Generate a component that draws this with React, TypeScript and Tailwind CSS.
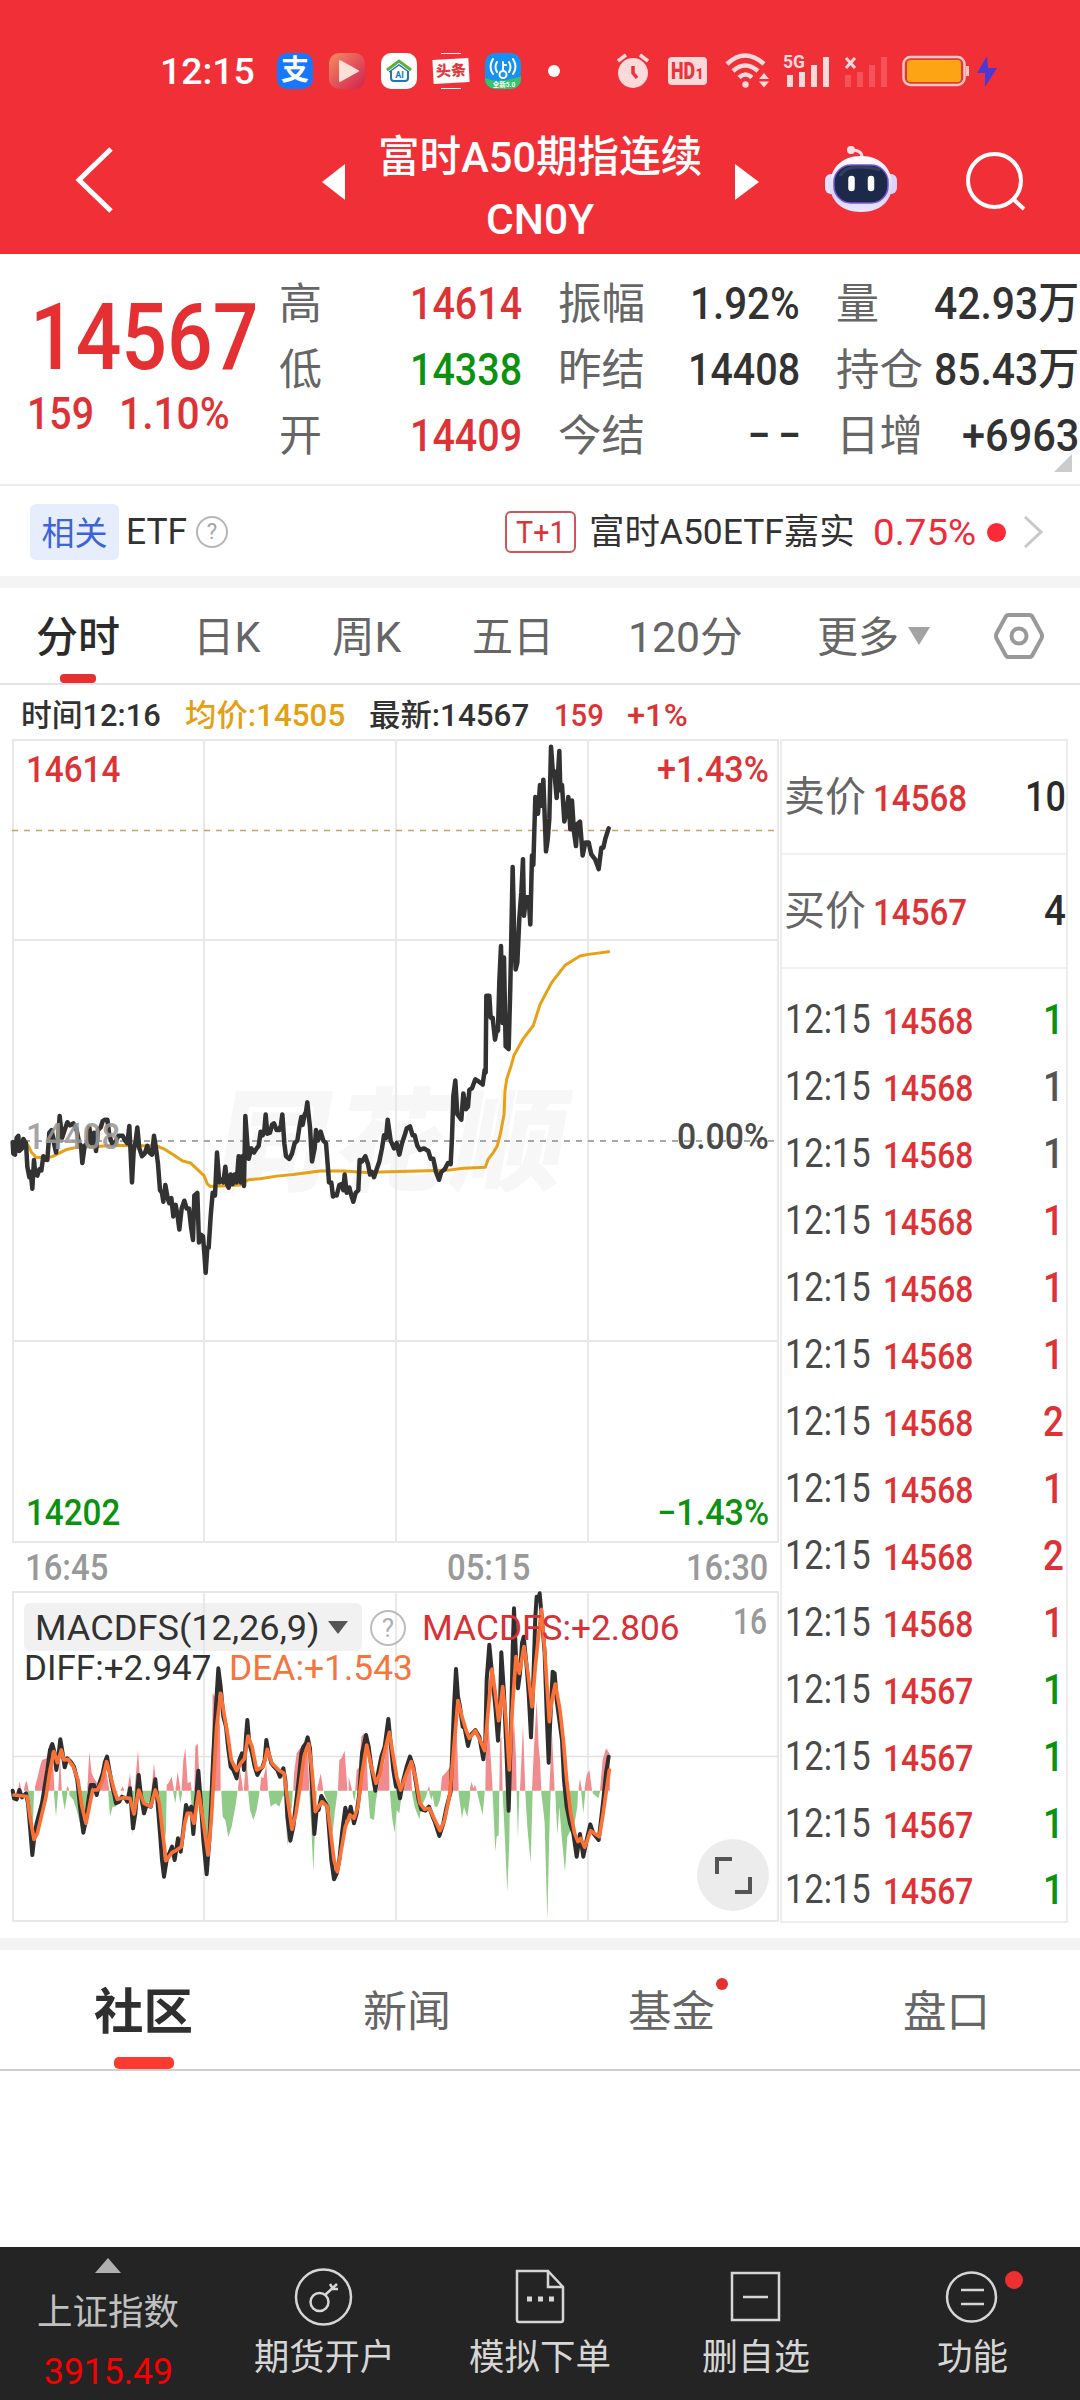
import React, { useLayoutEffect, useRef, useState } from 'react';

interface FitProps {
  w: number;
  className?: string;
  children: React.ReactNode;
}

// Condenses a line of text so that it fills exactly `w` pixels
const Fit: React.FC<FitProps> = ({ w, className = '', children }) => {
  const ref = useRef<HTMLSpanElement>(null);
  const [scale, setScale] = useState(1);

  useLayoutEffect(() => {
    if (ref.current) setScale(w / ref.current.offsetWidth);
  }, [w]);

  return (
    <span className={`inline-flex shrink-0 ${className}`} style={{ width: w }}>
      <span
        ref={ref}
        className="inline-block shrink-0 origin-left whitespace-pre"
        style={{ transform: `scaleX(${scale})` }}
      >
        {children}
      </span>
    </span>
  );
};

const tone = {
  red: 'text-[#dd3336]',
  green: 'text-[#0b920f]',
  dark: 'text-[#323232]',
  gray: 'text-[#555555]',
} as const;

type Tone = keyof typeof tone;

interface QuoteCell {
  label: string;
  labelW: number;
  value: string;
  valueW: number;
  color: Tone;
}

const quoteColumns: QuoteCell[][] = [
  [
    { label: '高', labelW: 43, value: '14614', valueW: 112, color: 'red' },
    { label: '低', labelW: 43, value: '14338', valueW: 112, color: 'green' },
    { label: '开', labelW: 43, value: '14409', valueW: 112, color: 'red' },
  ],
  [
    { label: '振幅', labelW: 87, value: '1.92%', valueW: 110, color: 'dark' },
    { label: '昨结', labelW: 87, value: '14408', valueW: 112, color: 'dark' },
    { label: '今结', labelW: 87, value: '– –', valueW: 52, color: 'dark' },
  ],
  [
    { label: '量', labelW: 43, value: '42.93万', valueW: 145, color: 'dark' },
    { label: '持仓', labelW: 87, value: '85.43万', valueW: 145, color: 'dark' },
    { label: '日增', labelW: 87, value: '+6963', valueW: 117, color: 'dark' },
  ],
];

const periods = [
  { label: '日K', w: 67, margin: 'ml-[73px]' },
  { label: '周K', w: 69, margin: 'ml-[72px]' },
  { label: '五日', w: 82, margin: 'ml-[71px]' },
  { label: '120分', w: 115, margin: 'ml-[74px]' },
  { label: '更多', w: 82, margin: 'ml-[74px]' },
];

const trades: { price: string; qty: number; color: Tone }[] = [
  { price: '14568', qty: 1, color: 'green' },
  { price: '14568', qty: 1, color: 'gray' },
  { price: '14568', qty: 1, color: 'gray' },
  { price: '14568', qty: 1, color: 'red' },
  { price: '14568', qty: 1, color: 'red' },
  { price: '14568', qty: 1, color: 'red' },
  { price: '14568', qty: 2, color: 'red' },
  { price: '14568', qty: 1, color: 'red' },
  { price: '14568', qty: 2, color: 'red' },
  { price: '14568', qty: 1, color: 'red' },
  { price: '14567', qty: 1, color: 'green' },
  { price: '14567', qty: 1, color: 'green' },
  { price: '14567', qty: 1, color: 'green' },
  { price: '14567', qty: 1, color: 'green' },
];

// Series are "x,y" pairs, x counts thirds of a pixel from the screen edge
const priceLine =
  '38,788 40,810 45,812 50,780 55,776 58,805 66,800 70,782 78,790 82,835 88,855 92,845 97,877 102,822 106,850 112,852 118,840 124,842 130,815 136,820 142,822 148,770 155,765 162,790 168,808 174,780 179,738 186,780 194,765 202,750 210,756 220,752 230,765 238,790 243,795 247,828 254,795 262,790 268,760 274,790 282,770 288,805 294,765 302,760 308,748 315,745 322,745 328,775 336,790 345,790 355,776 368,776 375,785 382,790 388,757 392,810 396,865 401,805 406,790 412,760 418,800 426,815 434,810 442,795 448,808 456,812 462,776 468,800 474,830 480,880 486,885 490,902 496,870 503,895 508,905 514,895 520,930 527,908 533,930 538,955 545,915 553,900 560,915 567,915 573,950 579,975 583,890 592,885 597,980 603,965 609,968 613,1000 617,1038 622,990 626,990 632,930 638,885 645,890 651,808 658,865 664,860 670,865 676,835 682,870 686,875 692,850 698,868 704,850 710,865 716,815 722,865 727,815 732,872 736,738 742,790 746,820 754,800 762,808 770,800 776,795 782,768 788,775 793,765 797,735 802,772 810,770 816,755 822,752 830,765 838,765 843,755 847,735 853,790 858,815 868,820 876,810 884,790 892,785 898,760 904,740 908,755 914,735 918,730 922,712 930,760 936,825 944,800 948,765 954,785 962,768 970,785 978,790 983,830 987,865 994,865 999,892 1006,888 1010,890 1018,870 1026,868 1030,880 1034,850 1040,885 1048,875 1054,890 1060,902 1067,885 1075,880 1079,822 1086,825 1096,815 1104,830 1110,850 1116,845 1122,855 1130,840 1138,825 1146,800 1152,775 1158,780 1163,745 1172,785 1182,800 1190,790 1198,812 1206,790 1214,775 1220,762 1230,758 1238,775 1244,775 1252,795 1260,803 1272,800 1285,805 1292,820 1300,820 1308,845 1317,860 1324,845 1334,840 1344,828 1352,830 1356,780 1360,700 1366,670 1372,735 1376,738 1384,745 1390,695 1398,725 1404,720 1408,688 1416,685 1426,668 1436,672 1448,678 1454,650 1457,655 1459,508 1468,508 1472,550 1478,550 1485,592 1490,575 1494,575 1498,480 1503,413 1508,560 1512,435 1517,605 1526,610 1531,490 1538,262 1543,400 1547,458 1552,445 1558,360 1564,310 1569,247 1572,355 1578,320 1586,320 1591,372 1596,240 1600,258 1606,128 1614,160 1620,105 1626,145 1630,95 1638,232 1643,210 1648,170 1653,32 1658,75 1663,80 1670,130 1678,40 1681,115 1686,105 1693,175 1700,155 1705,128 1711,190 1716,135 1722,195 1728,222 1732,180 1740,175 1748,240 1756,215 1766,215 1774,238 1786,248 1796,266 1804,225 1810,225 1816,208 1826,188';

const averageLine =
  '38,788 60,790 85,795 95,808 108,817 130,818 155,816 175,810 200,802 230,798 300,796 350,794 400,795 470,795 495,802 520,812 548,824 572,828 592,840 612,852 622,868 632,873 720,870 745,860 780,858 830,853 880,850 960,843 1030,843 1100,846 1140,845 1340,842 1390,838 1456,836 1465,820 1480,808 1492,795 1502,770 1512,735 1515,690 1520,668 1532,645 1542,622 1570,590 1600,565 1620,525 1655,483 1695,450 1740,432 1765,429 1826,424';

const diffLine =
  '38,752 42,775 50,778 58,750 66,772 78,760 84,790 90,860 97,945 104,880 110,850 118,820 126,790 134,740 142,690 150,630 157,612 163,635 169,690 175,650 181,598 188,640 194,682 202,655 212,665 222,680 232,720 240,800 250,878 258,840 264,790 272,735 282,735 290,765 298,730 308,700 315,665 321,650 328,690 336,735 344,770 348,790 358,785 366,770 376,775 382,785 390,745 399,865 406,820 416,705 422,760 432,820 440,795 452,800 458,770 466,718 472,780 480,880 486,960 492,1010 500,960 508,940 516,920 524,960 534,895 542,935 550,870 558,795 566,815 574,800 580,882 588,780 595,692 602,780 610,900 620,1003 628,900 634,780 640,640 648,500 655,385 662,440 670,530 678,560 684,620 692,680 700,690 710,715 718,660 726,640 732,690 738,590 742,540 748,610 756,640 764,680 772,705 780,690 788,680 794,660 799,600 806,640 814,670 822,680 832,690 840,710 850,685 856,720 862,830 871,902 880,860 888,790 896,720 904,640 910,620 918,610 923,592 930,625 936,740 943,882 950,810 956,810 964,768 974,785 982,800 988,880 994,960 1002,1018 1010,1000 1018,960 1026,880 1036,803 1044,840 1052,800 1062,850 1070,820 1078,760 1086,640 1098,585 1106,620 1114,680 1126,752 1134,700 1144,650 1154,620 1165,537 1172,610 1180,690 1188,740 1194,740 1200,775 1210,720 1220,680 1230,650 1240,680 1248,730 1256,780 1264,808 1276,812 1287,800 1296,825 1306,850 1318,888 1330,850 1340,800 1352,755 1358,600 1362,500 1368,387 1374,470 1380,500 1388,560 1394,565 1404,618 1412,585 1426,570 1438,590 1450,658 1456,600 1460,420 1468,314 1476,400 1486,500 1494,602 1500,500 1504,337 1512,460 1520,650 1526,812 1532,600 1538,330 1542,205 1548,350 1554,445 1560,400 1566,310 1571,290 1580,380 1586,460 1593,592 1600,420 1606,230 1610,170 1615,180 1619,160 1626,240 1634,340 1640,520 1646,668 1650,560 1658,395 1664,400 1670,480 1678,540 1686,600 1692,720 1700,800 1710,850 1720,880 1730,950 1740,882 1750,950 1760,900 1771,853 1780,880 1796,900 1802,850 1810,780 1818,700 1826,650';

const deaLine =
  '42,765 70,768 82,770 90,830 102,898 112,880 124,830 138,770 150,690 162,635 172,668 184,630 192,660 204,658 220,680 234,720 246,800 258,850 268,800 278,750 292,750 306,725 320,665 332,710 344,755 352,778 370,773 390,775 402,822 416,750 432,790 452,800 466,750 478,790 488,880 498,962 516,938 530,930 544,920 554,850 562,820 572,820 582,850 596,755 606,820 624,945 634,840 642,700 650,560 662,460 672,520 684,590 694,660 710,692 722,670 734,655 744,588 756,620 770,690 790,680 802,628 816,670 836,690 852,700 860,760 876,868 888,820 900,740 912,650 926,612 936,690 946,815 956,800 966,785 982,800 990,860 1002,960 1012,995 1022,940 1036,860 1050,825 1062,835 1074,800 1086,700 1100,615 1114,680 1128,730 1140,700 1150,650 1168,577 1180,650 1190,710 1202,750 1216,710 1234,665 1246,710 1260,790 1274,808 1288,805 1302,835 1320,872 1334,840 1350,760 1360,640 1374,482 1386,530 1398,570 1408,595 1426,572 1440,600 1454,632 1462,540 1476,387 1486,460 1496,542 1508,440 1518,540 1528,690 1536,520 1548,350 1558,400 1572,320 1584,400 1596,500 1606,380 1624,208 1634,330 1648,545 1656,480 1666,432 1680,510 1690,600 1700,720 1712,820 1724,880 1734,905 1742,895 1754,922 1772,872 1798,890 1808,830 1818,760 1828,690';

// Histogram clusters, each closed down to the zero line
const risingBars = [
  '55,745 59,725 64,750', '72,748 76,730 80,722 86,750',
  '105,740 112,715 120,680 126,660 140,655 150,610 158,640 163,745',
  '175,745 180,650 185,745', '200,745 203,738 207,748',
  '262,745 268,635 275,700 282,715 295,735 302,725 310,690 320,700 328,750',
  '362,750 368,738 372,750', '383,745 390,700 395,750', '404,745 414,630 422,745',
  '455,745 462,670 470,745', '500,735 506,728 515,710 522,750', '527,745 533,695 540,740',
  '545,745 550,660 556,625 563,730 572,725 575,750', '583,745 586,620 593,610 600,745',
  '630,740 636,640 638,460 645,470 655,500 660,560 662,745',
  '714,745 720,690 725,720 729,750', '732,745 738,650 746,740',
  '780,745 784,710 790,715 799,675 804,750',
  '880,745 882,700 890,640 900,625 912,620 922,620 928,745', '952,745 962,700 970,750',
  '1014,745 1018,660 1024,655 1034,632 1042,745', '1046,710 1056,750',
  '1066,745 1070,690 1078,680 1084,590 1092,580 1100,640 1104,750',
  '1134,745 1140,700 1150,680 1165,600 1168,720', '1210,745 1220,690 1232,665 1236,750',
  '1282,750 1287,738 1290,752', '1322,750 1326,710 1340,695 1350,680 1356,660 1362,600 1370,570 1373,650 1376,752',
  '1410,745 1415,725 1420,745 1425,735 1430,750', '1456,750 1458,620 1464,520 1470,620 1474,680 1478,752',
  '1498,750 1500,600 1504,590 1508,752', '1530,750 1534,640 1542,540 1548,650 1550,752',
  '1560,750 1569,555 1576,752', '1596,750 1602,620 1610,480 1616,620 1620,660 1624,752',
  '1648,750 1656,580 1664,752', '1736,745 1740,715 1746,752', '1754,745 1760,705 1768,690 1776,750',
  '1800,750 1808,660 1818,625 1828,640 1830,752',
];

const fallingBars = [
  '78,755 84,800 90,855 98,880 102,760', '162,760 168,830 174,760', '186,760 194,810 202,760',
  '208,765 220,780 230,810 242,860 250,880 258,840 262,760',
  '325,760 330,830 338,800 348,800 352,760', '390,760 398,885 404,760',
  '424,760 432,815 440,790 452,785 455,760', '474,760 482,900 490,950 498,870 500,760',
  '520,760 526,790 530,760', '536,760 541,790 546,760', '572,760 580,870 583,760',
  '600,760 608,850 618,960 628,860 632,760', '664,760 668,830 676,840 685,892 695,860 706,800 712,760',
  '745,760 750,810 760,840 770,810 778,760',
  '806,760 812,800 826,790 838,800 848,770 855,765 862,920 868,830 876,800 878,760',
  '928,760 934,860 940,995 946,840 950,760', '972,760 980,780 990,840 998,880 1004,820 1012,760',
  '1058,760 1063,785 1067,760', '1104,760 1110,835 1122,840 1128,780 1132,760',
  '1170,760 1176,830 1184,878 1190,810 1198,820 1204,770 1208,756',
  '1236,760 1244,800 1258,838 1264,800 1278,770 1282,756',
  '1288,760 1294,780 1298,765 1304,800 1312,800 1320,780 1324,756',
  '1376,760 1386,835 1392,800 1402,832 1410,770', '1432,760 1448,825 1454,756',
  '1478,760 1486,935 1490,890 1496,885 1498,756', '1508,760 1514,880 1522,1055 1528,900 1530,756',
  '1550,760 1554,895 1558,756', '1576,760 1582,860 1592,968 1598,756',
  '1624,760 1630,810 1634,850 1642,1140 1648,880 1652,756',
  '1666,760 1672,885 1678,800 1686,900 1695,995 1702,890 1712,870 1722,860 1732,800 1734,756',
  '1744,760 1750,820 1756,756', '1778,760 1795,775 1800,756',
];

const closeToZero = (points: string) => {
  const first = points.split(',')[0];
  const last = points.split(' ').pop()!.split(',')[0];
  return `${first},752 ${points} ${last},752`;
};

const StatusBar: React.FC = () => (
  <div className="flex h-[142px] items-center pl-[160px]">
    <Fit w={95} className="text-[37px] font-medium leading-none">12:15</Fit>
    <div className="ml-[22px] flex gap-4">
      <div className="flex size-9 items-center justify-center rounded-[10px] bg-[#1677ff] text-[28px] font-bold leading-none">支</div>
      <svg className="size-9" viewBox="0 0 36 36">
        <defs>
          <linearGradient id="play" x1="0" y1="0" x2="1" y2="1">
            <stop offset="0" stopColor="#f68b62" />
            <stop offset="1" stopColor="#cf2150" />
          </linearGradient>
        </defs>
        <rect width="36" height="36" rx="10" fill="url(#play)" />
        <path d="M11 8v20l18-10z" fill="#fde0d8" stroke="#fde0d8" strokeWidth="2" strokeLinejoin="round" />
      </svg>
      <svg className="size-9" viewBox="0 0 36 36" fill="none">
        <rect width="36" height="36" rx="10" fill="#fff" />
        <path d="M6 17 18 8l12 9" stroke="#5fae3a" strokeWidth="3" />
        <path d="M10 18v7q0 3 3 3h11q3 0 3-3v-7" stroke="#1d78b8" strokeWidth="2" />
        <path d="M8 19 18 12l10 7" stroke="#1d78b8" strokeWidth="1.5" />
        <text x="18.5" y="25" textAnchor="middle" fontSize="9" fontWeight="700" fill="#1d78b8">AI</text>
      </svg>
      <div className="flex size-9 flex-col items-center justify-between">
        <i className="h-px w-5 bg-white" />
        <div className="flex h-6 w-9 -rotate-3 items-center justify-center bg-white text-[15px] font-black leading-none text-[#e2383c]">头条</div>
        <i className="h-px w-5 bg-white" />
      </div>
      <svg className="size-9" viewBox="0 0 36 36" fill="none">
        <clipPath id="wifiKey"><rect width="36" height="36" rx="10" /></clipPath>
        <g clipPath="url(#wifiKey)">
          <rect width="36" height="36" fill="#1690f2" />
          <path d="M0 25q9 4 18 2.500t18-4V36H0z" fill="#35c46b" />
        </g>
        <g stroke="#fff" strokeWidth="2" strokeLinecap="round">
          <circle cx="18" cy="21.500" r="3.500" />
          <path d="M18 18V9m0 3h3M12 9q-3 5 0 10M8 6q-5 8 0 15M24 9q3 5 0 10M28 6q5 8 0 15" />
        </g>
        <text x="19" y="34" textAnchor="middle" fontSize="6.500" fontWeight="700" fill="#fff">全新5.0</text>
      </svg>
    </div>
    <i className="ml-[27px] size-3 rounded-full bg-white" />
    <svg className="ml-[57px] h-9 w-8" viewBox="0 0 32 36" fill="#fdd9da">
      <circle cx="16" cy="20" r="15" />
      <path d="M1 8 9 2M31 8 23 2" stroke="#fdd9da" strokeWidth="3.5" />
      <path d="M16 13v7l4 5" stroke="#e8343b" strokeWidth="3.5" fill="none" />
    </svg>
    <div className="ml-[19px] flex h-7 w-[39px] items-center justify-center rounded bg-[#fdd9da] text-[#e8343b]">
      <Fit w={24} className="text-[23px] font-black leading-none">HD</Fit>
      <span className="mt-1.5 text-[14px] font-black leading-none">1</span>
    </div>
    <svg className="ml-[18px] h-9 w-[46px]" viewBox="0 0 46 36" fill="none" stroke="#fdd9da" strokeWidth="4.500">
      <path d="M2 11Q20-6 39 11M8 18q12-11 25 0M14 24.500q6.500-6 13 0" />
      <circle cx="20.500" cy="31.500" r="3.200" fill="#fdd9da" stroke="none" />
      <path d="M34 26l5-6 5 6zM34 28.500l5 6 5-6z" fill="#fdd9da" stroke="none" />
    </svg>
    <svg className="ml-[12px] h-10 w-[48px] overflow-visible" viewBox="0 -2 48 40" fill="#fdd9da">
      <text x="0" y="15" fontSize="19" fontWeight="700" textLength="22" lengthAdjust="spacingAndGlyphs">5G</text>
      <path d="M4 22h6v12H4zM16 19h6v15h-6zM28 12h6v22h-6zM40 4h6v30h-6z" />
    </svg>
    <svg className="ml-[13px] h-9 w-[44px]" viewBox="0 0 44 36">
      <path d="m2 5 9 10M11 5 2 15" stroke="#fdd9da" strokeWidth="3" />
      <path d="M1 22h6v12H1zM13 19h6v15h-6zM25 12h6v22h-6zM37 4h6v30h-6z" fill="#f5525a" />
    </svg>
    <svg className="ml-[14px] h-9 w-[96px]" viewBox="0 0 96 36">
      <rect x="1.500" y="4" width="61" height="28" rx="7" fill="#df3b35" stroke="#fbc5c4" strokeWidth="2.500" />
      <rect x="5" y="7" width="54" height="22" rx="3.500" fill="#fda414" />
      <path d="M65.500 13v10" stroke="#fbc5c4" strokeWidth="3" />
      <path d="M85 3 75 20h8l0 14 12-19h-9z" fill="#4a3ad3" />
    </svg>
  </div>
);

const TitleBar: React.FC = () => (
  <div className="flex h-[112px] pl-[75px]">
    <svg className="mt-[5px] h-[66px] w-10" viewBox="0 0 40 66" fill="none" stroke="#fff" strokeWidth="5">
      <path d="M36 2 4 33l32 31" />
    </svg>
    <svg className="ml-[207px] mt-[22px] h-9 w-6" viewBox="0 0 24 36" fill="#fff">
      <path d="M0 18 23 0v36z" />
    </svg>
    <div className="-mt-[16px] ml-[32px] flex w-[324px] flex-col items-center font-medium">
      <Fit w={324} className="text-[43px] leading-[62px]">富时A50期指连续</Fit>
      <Fit w={108} className="text-[43px] leading-[62px]">CN0Y</Fit>
    </div>
    <svg className="ml-[33px] mt-[22px] h-9 w-6" viewBox="0 0 24 36" fill="#fff">
      <path d="M24 18 0 0v36z" />
    </svg>
    <svg className="ml-[65px] mt-[3px] h-[68px] w-[74px]" viewBox="0 0 74 68">
      <defs>
        <linearGradient id="shell" x1="0" y1="0" x2="0" y2="1">
          <stop offset="0" stopColor="#ffffff" />
          <stop offset=".7" stopColor="#d6d3fb" />
          <stop offset="1" stopColor="#e9e8fd" />
        </linearGradient>
      </defs>
      <path d="M38 12Q38 5 27 5" fill="none" stroke="#fbdfe6" strokeWidth="3" />
      <circle cx="27" cy="5" r="4" fill="#fbe3ea" />
      <rect x="1" y="29" width="12" height="20" rx="6" fill="#e4e1fb" />
      <rect x="61" y="29" width="12" height="20" rx="6" fill="#d9d5fa" />
      <path d="M37 11C57 11 68 24 68 40S56 67 37 67 6 56 6 40 17 11 37 11z" fill="url(#shell)" />
      <rect x="10" y="20" width="54" height="38" rx="17" fill="#1c2948" stroke="#7a55d8" strokeWidth="1.500" />
      <path d="M16 31q4-9 18-9t22 3" fill="none" stroke="#33415f" strokeWidth="3" />
      <path d="M27.500 34v9M47 34v9" stroke="#fff" strokeWidth="6.500" strokeLinecap="round" />
    </svg>
    <svg className="ml-[66px] mt-[8px] h-[64px] w-[64px]" viewBox="0 0 64 64" fill="none" stroke="#fff" strokeWidth="4">
      <circle cx="30.500" cy="30.500" r="26.500" />
      <path d="m48 48 12 11" />
    </svg>
  </div>
);

const QuotePanel: React.FC = () => (
  <div className="relative flex h-[232px] border-b-2 border-[#ececec] pt-[17px]">
    <div className="w-[279px] shrink-0 text-[#e43032]">
      <Fit w={228} className="ml-[30px] mt-[21px] text-[92px] font-medium leading-[92px]">14567</Fit>
      <div className="mt-[10px] flex pl-[27px] text-[44px] font-medium leading-[40px] text-[#dd3336]">
        <Fit w={67}>159</Fit>
        <Fit w={111} className="ml-[25px]">1.10%</Fit>
      </div>
    </div>
    <div className="grid grid-cols-[243px_242px_243px] gap-x-[36px]">
      {quoteColumns.map((cells) => (
        <div key={cells[0].label}>
          {cells.map((cell) => (
            <div key={cell.label} className="flex h-[66px] items-center justify-between leading-none">
              <Fit w={cell.labelW} className="text-[43px] text-[#666666]">{cell.label}</Fit>
              <Fit w={cell.valueW} className={`text-[44px] font-medium ${tone[cell.color]}`}>{cell.value}</Fit>
            </div>
          ))}
        </div>
      ))}
    </div>
    <svg className="absolute bottom-[12px] right-[8px] h-[18px] w-[18px]" viewBox="0 0 18 18" fill="#cccccc">
      <path d="M18 0v18H0z" />
    </svg>
  </div>
);

const RelatedEtf: React.FC = () => (
  <div className="flex h-[90px] items-center pl-[30px] pt-0.5 leading-none">
    <div className="flex h-14 w-[89px] items-center justify-center rounded-md bg-[#e6edfc] pt-0.5">
      <Fit w={66} className="text-[33px] text-[#3c63d8]">相关</Fit>
    </div>
    <Fit w={61} className="ml-[7px] text-[36px] text-[#323232]">ETF</Fit>
    <div className="ml-[9px] flex size-8 items-center justify-center rounded-full border-2 border-[#b5b5b5] text-[22px] text-[#a5a5a5]">?</div>
    <div className="ml-[277px] flex h-[42px] w-[71px] items-center justify-center rounded-md border-2 border-[#cf5558]">
      <Fit w={50} className="text-[31px] text-[#dd3336]">T+1</Fit>
    </div>
    <Fit w={266} className="ml-[13px] text-[35px] text-[#323232]">富时A50ETF嘉实</Fit>
    <Fit w={103} className="ml-[18px] text-[37px] text-[#ee2b3a]">0.75%</Fit>
    <i className="ml-[11px] size-[19px] rounded-full bg-[#fb2b37]" />
    <svg className="ml-[17px] h-[34px] w-[22px]" viewBox="0 0 22 34" fill="none" stroke="#c8c8c8" strokeWidth="3">
      <path d="m2 2 16 15L2 32" />
    </svg>
  </div>
);

const PeriodTabs: React.FC = () => (
  <div className="flex h-[97px] items-center border-b-2 border-[#e4e4e4] pl-[36px] text-[42px] leading-none text-[#666666]">
    <div className="relative flex h-full items-center">
      <Fit w={84} className="pt-1 font-medium text-[#2b2b2b]">分时</Fit>
      <i className="absolute bottom-0 left-6 h-[9px] w-9 rounded-[4px] bg-[#e5312f]" />
    </div>
    {periods.map((period) => (
      <Fit key={period.label} w={period.w} className={`pt-1 ${period.margin}`}>{period.label}</Fit>
    ))}
    <svg className="ml-[8px] h-[20px] w-[24px]" viewBox="0 0 24 20" fill="#a3a3a3">
      <path d="M1 1h22L12 19z" />
    </svg>
    <svg className="ml-[63px] h-[48px] w-[50px]" viewBox="0 0 50 48" fill="none" stroke="#999999" strokeWidth="4">
      <path d="M14.500 3h21q2 0 3 2l9 16.500q1 2.500 0 5L38.500 43q-1 2-3 2h-21q-2 0-3-2l-9-16.500q-1-2.500 0-5L11.500 5q1-2 3-2z" />
      <circle cx="25" cy="24" r="7.500" />
    </svg>
  </div>
);

const PriceChart: React.FC = () => (
  <div className="relative h-[804px]">
    <svg className="block h-full w-[780px]" viewBox="0 739 780 804" fill="none">
      <text x="216" y="1182" fontSize="112" fontWeight="800" fill="#f7f7f7" textLength="348" transform="translate(205 0) skewX(-10)">同花顺</text>
      <path d="M13 740H778V1542H13zM13 940H778M13 1341H778M204 740V1542M396 740V1542M588 740V1542" stroke="#e8e8e8" strokeWidth="2" />
      <path d="M12 830.500H776" stroke="#c9a06a" strokeWidth="1.500" strokeDasharray="6 6" />
      <path d="M12 1141H776" stroke="#8c8c8c" strokeWidth="1.500" strokeDasharray="6 6" />
      <g transform="translate(0 730) scale(.33333 .523)" strokeLinejoin="round" strokeLinecap="round">
        <polyline points={averageLine} stroke="#e6a117" strokeWidth="3" vectorEffect="non-scaling-stroke" />
        <polyline points={priceLine} stroke="#323232" strokeWidth="4.500" vectorEffect="non-scaling-stroke" />
      </g>
    </svg>
    <div className="absolute inset-y-0 left-[26px] flex flex-col justify-between pb-[12px] pt-[13px] text-[36px] font-medium leading-[36px]">
      <Fit w={94} className="text-[#dd3336]">14614</Fit>
      <Fit w={94} className="-mt-[9px] text-[#999999]/90">14408</Fit>
      <Fit w={94} className="text-[#0b920f]">14202</Fit>
    </div>
    <div className="absolute inset-y-0 left-[656px] flex w-[113px] flex-col items-end justify-between pb-[12px] pt-[13px] text-[36px] font-medium leading-[36px]">
      <Fit w={112} className="text-[#dd3336]">+1.43%</Fit>
      <Fit w={92} className="-mt-[9px] text-[#4a4a4a]">0.00%</Fit>
      <Fit w={112} className="text-[#0b920f]">−1.43%</Fit>
    </div>
  </div>
);

const MacdChart: React.FC = () => (
  <div className="relative h-[331px] leading-none text-[#323232]">
    <svg className="block h-full w-[780px]" viewBox="0 1591 780 331" fill="none">
      <path d="M13 1592H778V1921H13z" stroke="#e8e8e8" strokeWidth="2" />
      <rect x="24" y="1603" width="338" height="48" rx="6" fill="#f1f1f1" />
      <path d="M13 1756.500H778M204 1592V1921M396 1592V1921M588 1592V1921" stroke="#e2e2e2" strokeWidth="1.500" />
      <g transform="translate(0 1540) scale(.33333)" strokeLinejoin="round" strokeLinecap="round">
        {risingBars.map((bar) => <polygon key={bar} points={closeToZero(bar)} fill="#f18b8e" />)}
        {fallingBars.map((bar) => <polygon key={bar} points={closeToZero(bar)} fill="#90cb87" />)}
        <polyline points={diffLine} stroke="#2e2e2e" strokeWidth="12" />
        <polyline points={deaLine} stroke="#fa7238" strokeWidth="11" />
      </g>
      <path d="M328 1621h20l-10 13z" fill="#555555" />
    </svg>
    <div className="absolute left-[35px] top-[19px] flex items-center text-[35px]">
      <Fit w={285}>MACDFS(12,26,9)</Fit>
      <div className="ml-[50px] flex size-9 items-center justify-center rounded-full border-2 border-[#bdbdbd] text-[26px] text-[#b0b0b0]">?</div>
      <Fit w={258} className="ml-[16px] text-[#d63135]">MACDFS:+2.806</Fit>
    </div>
    <div className="absolute left-[24px] top-[60px] flex text-[35px]">
      <Fit w={187}>DIFF:+2.947</Fit>
      <Fit w={184} className="ml-[18px] text-[#f47540]">DEA:+1.543</Fit>
    </div>
    <Fit w={34} className="absolute left-[733px] top-[13px] text-[36px] font-medium text-[#999999]">16</Fit>
    <svg className="absolute left-[697px] top-[248px] size-[72px]" viewBox="0 0 72 72" fill="none">
      <circle cx="36" cy="36" r="36" fill="#ececec" />
      <path d="M20 35V20h15M53 38v15H38" stroke="#555555" strokeWidth="4" />
    </svg>
  </div>
);

const OrderPanel: React.FC = () => (
  <div className="h-[1184px] w-[288px] border-2 border-[#ededed] font-medium leading-none">
    {[
      { label: '卖价', price: '14568', qty: '10', w: 41 },
      { label: '买价', price: '14567', qty: '4', w: 22 },
    ].map((level) => (
      <div key={level.label} className="flex h-[114px] items-center border-b-2 border-[#f1f1f1] pl-[2px]">
        <Fit w={82} className="text-[41px] font-normal text-[#666666]">{level.label}</Fit>
        <Fit w={94} className="ml-[7px] mt-0.5 text-[37px] text-[#dd3336]">{level.price}</Fit>
        <Fit w={level.w} className="ml-auto text-[42px] text-[#2b2b2b]">{level.qty}</Fit>
      </div>
    ))}
    <div className="pt-[18px]">
      {trades.map((trade, i) => (
        <div key={i} className="flex h-[66.93px] items-center pl-[3px] pr-[2px]">
          <Fit w={86} className="text-[40px] font-normal text-[#4a4a4a]">12:15</Fit>
          <Fit w={90} className="ml-[12px] mt-1 text-[36px] text-[#dd3336]">{trade.price}</Fit>
          <Fit w={21} className={`ml-auto text-[42px] ${tone[trade.color]}`}>{trade.qty}</Fit>
        </div>
      ))}
    </div>
  </div>
);

const SectionTabs: React.FC = () => (
  <div className="flex h-[121px] items-center border-b-2 border-[#cfcfcf] pl-[94px] text-[43px] leading-none text-[#666666]">
    <div className="relative flex h-full items-center">
      <Fit w={99} className="pt-1.5 text-[49px] font-bold text-[#2f2f2f]">社区</Fit>
      <i className="absolute bottom-0 left-5 h-[12px] w-[60px] rounded-[5px] bg-[#fd3a30]" />
    </div>
    <Fit w={88} className="ml-[170px] pt-1.5">新闻</Fit>
    <div className="relative ml-[177px] flex pt-1.5">
      <Fit w={87}>基金</Fit>
      <i className="absolute -right-[13px] -top-[7px] size-3 rounded-full bg-[#e3312f]" />
    </div>
    <Fit w={87} className="ml-[188px] pt-1.5">盘口</Fit>
  </div>
);

const iconProps = { fill: 'none', stroke: '#d6d6d6', strokeWidth: 2.5, viewBox: '0 0 60 60', className: 'size-[60px]' };

const toolbar = [
  {
    label: '期货开户',
    w: 141,
    icon: (
      <svg {...iconProps}>
        <circle cx="29.500" cy="30" r="27.500" />
        <circle cx="25.500" cy="35" r="9" />
        <path d="M31 28 43 17M36 17l3 5 5 0" />
      </svg>
    ),
  },
  {
    label: '模拟下单',
    w: 142,
    icon: (
      <svg {...iconProps}>
        <path d="M7 4h31l15 16v33q0 2-2 2H9q-2 0-2-2zM38 4v16h15" />
        <path d="M17 32h5M28 32h5M39 32h5" strokeWidth="5" />
      </svg>
    ),
  },
  {
    label: '删自选',
    w: 108,
    icon: (
      <svg {...iconProps}>
        <path d="M6 6h47v47H6zM17 30h25" />
      </svg>
    ),
  },
  {
    label: '功能',
    w: 71,
    icon: (
      <svg {...iconProps}>
        <circle cx="29.500" cy="30" r="24.500" />
        <path d="M19 23h23M19 37h23" />
      </svg>
    ),
  },
];

const BottomBar: React.FC = () => (
  <div className="grid h-[153px] grid-cols-5 bg-[#242424] leading-none text-[#d6d6d6]">
    <div className="flex flex-col items-center">
      <svg className="mt-[11px] h-[15px] w-[26px]" viewBox="0 0 26 15" fill="#b0b0b0">
        <path d="M13 0 26 15H0z" />
      </svg>
      <Fit w={142} className="mt-[22px] text-[36px] text-[#c0c0c0]">上证指数</Fit>
      <Fit w={129} className="mt-[23px] text-[36px] text-[#fb0000]">3915.49</Fit>
    </div>
    {toolbar.map((item) => (
      <div key={item.label} className="relative flex flex-col items-center pt-5">
        {item.icon}
        <Fit w={item.w} className="mt-[13px] text-[36px]">{item.label}</Fit>
        {item.label === '功能' && <i className="absolute left-[141px] top-[24px] size-[18px] rounded-full bg-[#ec3030]" />}
      </div>
    ))}
  </div>
);

export default function App() {
  return (
    <div className="flex h-[2400px] w-[1080px] flex-col overflow-hidden bg-white font-['Roboto','Noto_Sans_CJK_SC',sans-serif]">
      <header className="h-[254px] shrink-0 bg-[#f12f37] text-white">
        <StatusBar />
        <TitleBar />
      </header>
      <QuotePanel />
      <RelatedEtf />
      <div className="h-3 shrink-0 bg-[#f4f4f4]" />
      <PeriodTabs />
      <div className="flex h-[54px] items-center pl-[21px] pt-1.5 text-[31px] font-medium leading-none text-[#323232]">
        <Fit w={140}>时间12:16</Fit>
        <Fit w={160} className="ml-[24px] text-[#e3a012]">均价:14505</Fit>
        <Fit w={160} className="ml-[24px]">最新:14567</Fit>
        <Fit w={50} className="ml-[25px] text-[#dd3336]">159</Fit>
        <Fit w={61} className="ml-[23px] text-[#dd3336]">+1%</Fit>
      </div>
      <div className="flex h-[1199px] shrink-0">
        <div className="w-[780px] shrink-0">
          <PriceChart />
          <div className="flex h-12 items-center pl-[25px] pt-0.5 text-[36px] font-medium leading-none text-[#999999]">
            <Fit w={83}>16:45</Fit>
            <Fit w={83} className="ml-[339px]">05:15</Fit>
            <Fit w={82} className="ml-[156px]">16:30</Fit>
          </div>
          <MacdChart />
        </div>
        <OrderPanel />
      </div>
      <div className="h-3 shrink-0 bg-[#f4f4f4]" />
      <SectionTabs />
      <div className="flex-1" />
      <BottomBar />
    </div>
  );
}
